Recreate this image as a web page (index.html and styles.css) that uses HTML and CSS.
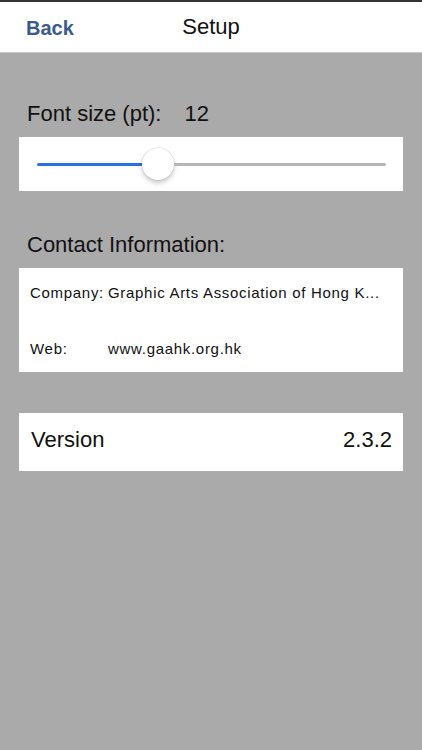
FILE: index.html
```html
<!DOCTYPE html>
<html lang="en">
<head>
<meta charset="utf-8">
<title>Setup</title>
<link rel="stylesheet" href="styles.css">
</head>
<body>
<header class="nav">
  <a class="nav-back" href="#">Back</a>
  <h1 class="nav-title">Setup</h1>
  <span class="nav-spacer"></span>
</header>
<main class="content">
  <div class="label font-label"><span>Font size (pt):</span><span class="font-value">12</span></div>
  <div class="card slider-card">
    <div class="slider">
      <div class="slider-fill" style="width:105px"></div>
      <div class="slider-thumb"></div>
      <div class="slider-rest"></div>
    </div>
  </div>

  <div class="label contact-label">Contact Information:</div>
  <div class="card contact-card">
    <div class="contact-row"><span class="contact-key">Company:</span><span class="contact-val">Graphic Arts Association of Hong K...</span></div>
    <div class="contact-row web-row"><span class="contact-key web-key">Web:</span><span class="contact-val">www.gaahk.org.hk</span></div>
  </div>

  <div class="card version-card">
    <span>Version</span>
    <span>2.3.2</span>
  </div>
</main>
</body>
</html>
```
FILE: styles.css
```css
* { box-sizing: border-box; }
html, body {
  margin: 0;
  padding: 0;
}
body {
  background: #aaaaaa;
  font-family: "Liberation Sans", Arial, sans-serif;
  color: #111;
  min-height: 750px;
}
.nav {
  height: 53px;
  background: #fff;
  border-top: 2px solid #333;
  border-bottom: 1px solid #c8c8c8;
  display: grid;
  grid-template-columns: 1fr auto 1fr;
  align-items: center;
  padding: 0 26px;
}
.nav-back {
  font-size: 20px;
  font-weight: bold;
  color: #3b5a8e;
  text-decoration: none;
  line-height: 26px;
  justify-self: start;
  padding-top: 1px;
}
.nav-title {
  margin: 0;
  font-size: 22px;
  font-weight: normal;
  line-height: 26px;
  color: #111;
}
.content {
  padding: 0 19px;
  display: flex;
  flex-direction: column;
}
.label {
  font-size: 22px;
  line-height: 26px;
  padding-left: 8px;
  color: #111;
}
.font-label {
  margin-top: 48px;
  display: flex;
}
.font-value {
  margin-left: 23px;
}
.card {
  background: #fff;
}
.slider-card {
  margin-top: 10px;
  height: 54px;
  padding: 0 17px 0 18px;
  display: flex;
  align-items: center;
}
.slider {
  flex: 1;
  display: flex;
  align-items: center;
  height: 32px;
}
.slider-fill {
  height: 3px;
  background: #2871e3;
  border-radius: 2px 0 0 2px;
}
.slider-thumb {
  width: 32px;
  height: 32px;
  border-radius: 50%;
  background: #fff;
  box-shadow: 0 3px 5px rgba(0,0,0,0.22), 0 0 0 0.5px rgba(0,0,0,0.12);
  flex: none;
}
.slider-rest {
  flex: 1;
  height: 3px;
  background: #b6b6b6;
  border-radius: 0 2px 2px 0;
}
.contact-label {
  margin-top: 41px;
}
.contact-card {
  margin-top: 10px;
  height: 104px;
  padding: 16px 11px 14px 11px;
  display: flex;
  flex-direction: column;
  justify-content: space-between;
}
.contact-row {
  font-size: 15px;
  line-height: 18px;
  letter-spacing: 0.7px;
  white-space: nowrap;
  color: #111;
  display: flex;
}
.contact-key {
  margin-right: 4px;
}
.web-key {
  width: 78px;
  margin-right: 0;
}
.version-card {
  margin-top: 41px;
  height: 58px;
  padding: 14px 11px 18px 12px;
  display: flex;
  justify-content: space-between;
  align-items: center;
  font-size: 22px;
  line-height: 26px;
  color: #111;
}
```
